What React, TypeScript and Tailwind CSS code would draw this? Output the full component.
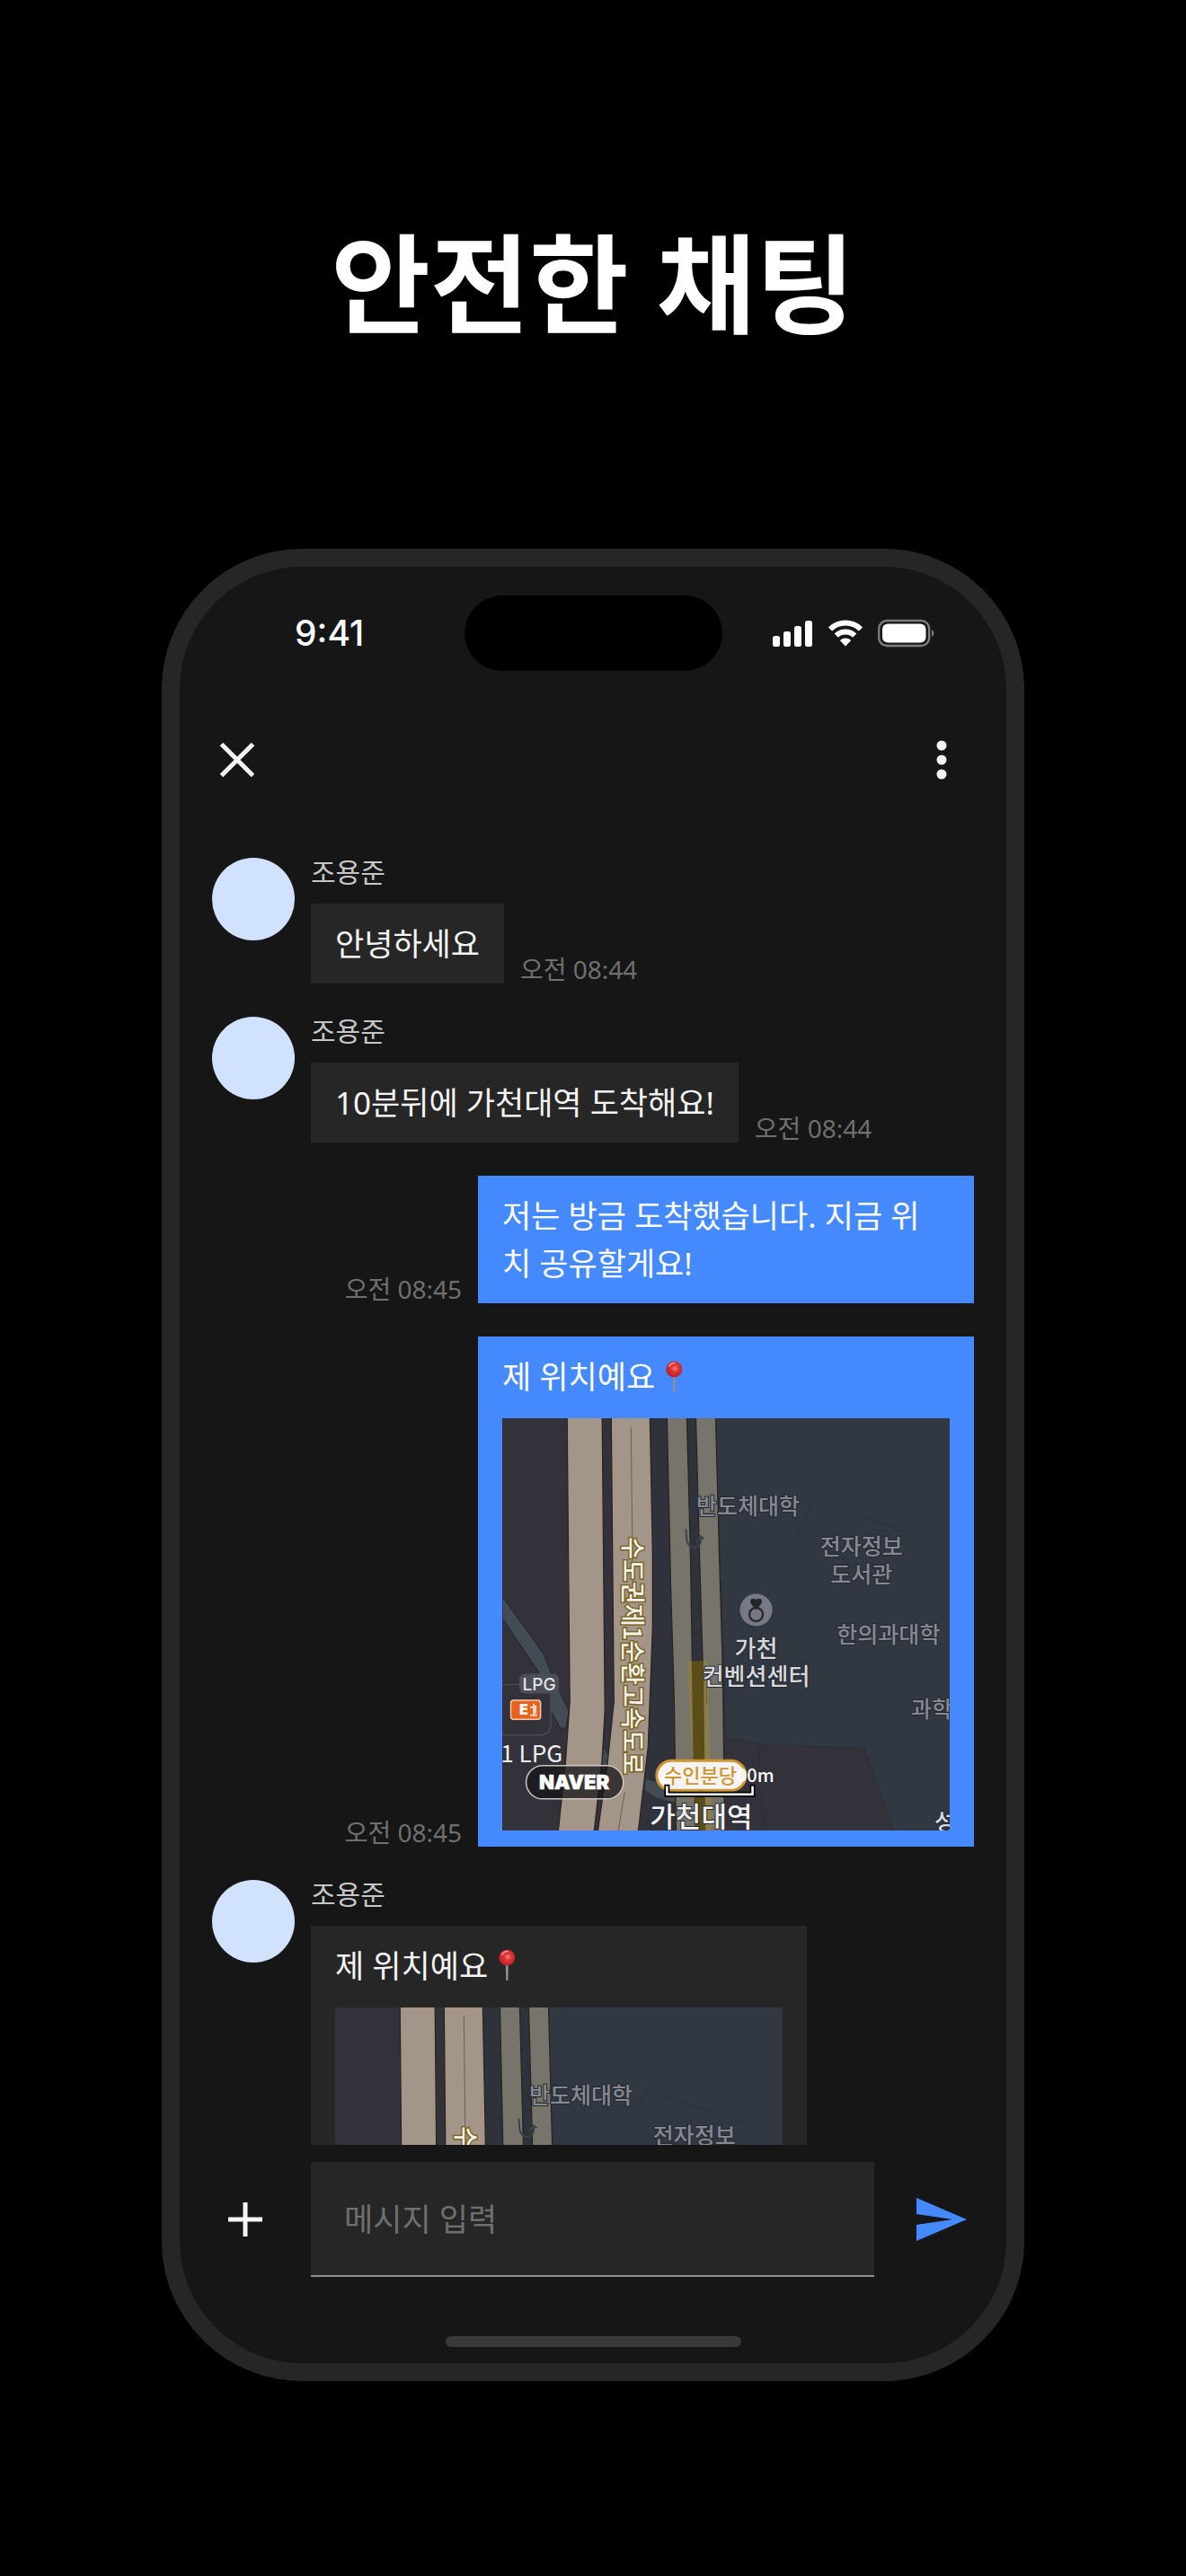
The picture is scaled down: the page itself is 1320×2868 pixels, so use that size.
import { useState, ChangeEvent, ReactNode } from 'react';

interface Message {
  id: number;
  sender: string;
  mine: boolean;
  text: string;
  time: string;
  hasMap?: boolean;
}

const messages: Message[] = [
  { id: 1, sender: '조용준', mine: false, text: '안녕하세요', time: '오전 08:44' },
  { id: 2, sender: '조용준', mine: false, text: '10분뒤에 가천대역 도착해요!', time: '오전 08:44' },
  { id: 3, sender: '나', mine: true, text: '저는 방금 도착했습니다. 지금 위\n치 공유할게요!', time: '오전 08:45' },
  { id: 4, sender: '나', mine: true, text: '제 위치예요', time: '오전 08:45', hasMap: true },
  { id: 5, sender: '조용준', mine: false, text: '제 위치예요', time: '오전 08:46', hasMap: true },
];

function SignalIcon() {
  return (
    <svg viewBox="0 0 45 30" className="w-[45px] h-[30px]" fill="#fff" aria-hidden="true">
      <rect x="0" y="18" width="8" height="12" rx="2.5" />
      <rect x="12" y="13" width="8" height="17" rx="2.5" />
      <rect x="24" y="7" width="8" height="23" rx="2.5" />
      <rect x="36" y="1" width="8" height="29" rx="2.5" />
    </svg>
  );
}

function WifiIcon() {
  return (
    <svg viewBox="0 0 40 30" className="w-10 h-[30px]" aria-hidden="true">
      <g fill="none" stroke="#fff" strokeWidth="6">
        <path d="M3 10.5 A24 24 0 0 1 37 10.5" />
        <path d="M9.8 17.6 A14.6 14.6 0 0 1 30.2 17.6" />
      </g>
      <path d="M20 29.4 L13.8 23 A9 9 0 0 1 26.2 23 Z" fill="#fff" />
    </svg>
  );
}

function BatteryIcon() {
  return (
    <svg viewBox="0 0 64 32" className="w-16 h-8" aria-hidden="true">
      <rect x="1.2" y="2" width="56" height="28" rx="9" fill="none" stroke="#7d7d7d" strokeWidth="2.4" />
      <rect x="5" y="5.5" width="48.5" height="21" rx="6" fill="#fff" />
      <path d="M60 12 a4.5 4.5 0 0 1 0 8 z" fill="#7d7d7d" />
    </svg>
  );
}

function PinIcon() {
  return (
    <svg viewBox="0 0 42 42" className="w-[42px] h-[42px] shrink-0" role="img" aria-label="핀">
      <defs>
        <radialGradient id="pinHead" cx="0.55" cy="0.45" r="0.6">
          <stop offset="0" stopColor="#f58078" />
          <stop offset="0.35" stopColor="#e0393a" />
          <stop offset="1" stopColor="#b81722" />
        </radialGradient>
      </defs>
      <path d="M19.8 20 h3 l-0.4 18 h-2.2 z" fill="#8f8e94" />
      <circle cx="21.3" cy="12.5" r="9" fill="url(#pinHead)" />
      <path d="M15.5 9 q2.5 -3.5 6.5 -3.5" stroke="#f5a09a" strokeWidth="1.5" fill="none" strokeLinecap="round" />
    </svg>
  );
}

function LocationMap() {
  return (
    <svg
      viewBox="0 0 497 458"
      className="block w-full h-auto mt-5 font-['Noto_Sans_CJK_KR',sans-serif] font-medium"
      role="img"
      aria-label="가천대역 주변 지도"
    >
      <rect width="497" height="458" fill="#33323a" />
      <path d="M164 0 H237 L249 355 L230 458 H160 Z" fill="#2f323b" />
      <path d="M237 0 H497 V458 H435 L402 367 L285 362 L249 355 Z" fill="#313842" />
      <path d="M402 367 L435 458 M285 362 L290 458 M249 355 L285 362 L402 367" stroke="#2d3037" strokeWidth="1.5" fill="none" />
      <path d="M328 132 L346 90 L465 133" stroke="#2e343d" strokeWidth="1.5" fill="none" />

      {/* side street */}
      <path d="M0 198 L46 262 L56 288 L74 325 L71 344 L65 345 L50 318 L41 283 L0 222 Z" fill="#434b55" stroke="#26272d" />
      <path d="M113 368 L118 374 L117 400 L110 385 Z" fill="#434b55" />
      <path d="M159 401 L193 411 V427 L172 422 L159 414 Z" fill="#434b55" />

      {/* expressway */}
      <g fill="#a39588" stroke="#29241f" strokeWidth="1.3">
        <path d="M72 -2 L74 215 L75 315 L70 385 L62 460 H102 L111 379 L114 325 L113 215 L111 -2 Z" />
        <path d="M121 -2 L124 315 L117 382 L106 460 H151 L162 365 L167 232 L167 149 L164 -2 Z" />
      </g>
      <path d="M143 10 L145 182 M136 415 L129 458" stroke="#6a5f56" fill="none" />
      <g fill="#77746c" stroke="#29241f" strokeWidth="1.3">
        <path d="M183 -2 L187 182 L191 315 L193 460 H214 L211 269 L209 149 L205 -2 Z" />
        <path d="M215 -2 L219 149 L223 282 L225 460 H247 L245 282 L241 149 L237 -2 Z" />
      </g>
      <path d="M206 270 H228 L231 380 L233 458 H213 L211 380 Z" fill="#a38b1b" fillOpacity="0.4" />
      <path d="M211 270 H223 L225 458 H215 Z" fill="#5a4a10" fillOpacity="0.7" />
      <path d="M209 306 l4 4 M227 318 v-18" stroke="#6d6125" fill="none" />
      <path d="M204 123 L205 136 Q207 144 214 144 Q221 143 221 132 M216 138 L220 131 L224 134" stroke="#3c4048" strokeWidth="2" fill="none" />

      {/* gas station */}
      <rect x="-6" y="296" width="60" height="56" rx="11" fill="#33323a" stroke="#54545c" />
      <rect x="19" y="284" width="44" height="22" rx="6" fill="#4c4f56" />
      <text x="41" y="302" fontSize="19" textAnchor="middle" fill="#e4e4e6" className="font-['Inter',sans-serif]">LPG</text>
      <rect x="9.5" y="313.5" width="33" height="21" rx="3" fill="#e8611f" stroke="#f7c9a9" strokeWidth="1.5" />
      <text x="19" y="329" fontSize="16" fill="#fff" className="font-['Inter',sans-serif] font-black">E</text>
      <path d="M35 317 v13 M31 321 h4 M31 330 h8 M37 319 v9" stroke="#fbd9c4" strokeWidth="2" fill="none" />
      <text x="67" y="382" fontSize="26" textAnchor="end" fill="#efeff1" fontWeight="400">1 LPG</text>

      {/* place names */}
      <g textAnchor="middle" stroke="#26282f" strokeWidth="2" paintOrder="stroke">
        <g fontSize="25" fill="#858993">
          <text x="273" y="107">반도체대학</text>
          <text x="399" y="152">전자정보</text>
          <text x="399" y="183">도서관</text>
          <text x="429" y="250">한의과대학</text>
          <text x="477" y="332">과학</text>
        </g>
        <g fontSize="26" fill="#d8d8dc">
          <text x="282" y="265">가천</text>
          <text x="282" y="296">컨벤션센터</text>
          <text x="492" y="458">성</text>
        </g>
      </g>
      <circle cx="282" cy="213" r="18" fill="#777984" />
      <circle cx="282" cy="218" r="7.5" fill="none" stroke="#24262c" strokeWidth="2.2" />
      <path d="M282 212 L277 206 Q275 201 279 201 Q281 201 282 203 Q283 201 285 201 Q289 201 287 206 Z" fill="#24262c" stroke="#24262c" strokeWidth="1.5" />

      <text
        transform="translate(135 132) rotate(90)"
        fontSize="27"
        fill="#f4f2ea"
        stroke="#7a6424"
        strokeWidth="3"
        paintOrder="stroke"
      >
        수도권제1순환고속도로
      </text>

      {/* station and scale bar */}
      <text x="221" y="454" fontSize="31" textAnchor="middle" fill="#f1f1f3" stroke="#26282f" strokeWidth="2" paintOrder="stroke">가천대역</text>
      <rect x="171.5" y="380.5" width="99" height="33" rx="16.5" fill="#f4f4f6" stroke="#cf962f" strokeWidth="3" />
      <circle cx="184" cy="400" r="7" fill="#fff" />
      <text x="220" y="405" fontSize="22" textAnchor="middle" fill="#cf962f">수인분당</text>
      <text x="302" y="404" fontSize="20" textAnchor="end" fill="#fff">00m</text>
      <path d="M183 410 V418 H278 V410" fill="none" stroke="#000" strokeWidth="6" strokeLinecap="square" />
      <path d="M183 410 V418 H278 V410" fill="none" stroke="#fff" strokeWidth="2.5" strokeLinecap="square" />

      <rect x="26.5" y="386" width="108" height="37" rx="18.5" fill="#17161a" fillOpacity="0.75" stroke="#cfc6c2" strokeWidth="1.5" />
      <text x="80" y="412" fontSize="22" textAnchor="middle" fill="#fff" stroke="#fff" strokeWidth="0.5" className="font-['Inter',sans-serif] font-black">NAVER</text>
    </svg>
  );
}

function Time({ children }: { children: ReactNode }) {
  return <time className="text-[28px] leading-8 text-[#6f6f6f] whitespace-nowrap">{children}</time>;
}

function Bubble({ message }: { message: Message }) {
  const wide = message.mine || message.hasMap;
  return (
    <div
      className={`px-[27px] py-[18px] ${message.mine ? 'bg-[#4589ff] text-white' : 'bg-[#262626] text-[#f4f4f4]'} ${
        wide ? 'w-[552px]' : ''
      }`}
    >
      <div className="flex items-center">
        <p className="text-[35px] leading-[53px] whitespace-pre-line">{message.text}</p>
        {message.hasMap && <PinIcon />}
      </div>
      {message.hasMap && <LocationMap />}
    </div>
  );
}

function MessageRow({ message }: { message: Message }) {
  if (message.mine) {
    return (
      <li className="flex items-end justify-end gap-[18px] shrink-0">
        <Time>{message.time}</Time>
        <Bubble message={message} />
      </li>
    );
  }

  return (
    <li className="flex items-start gap-[18px] shrink-0">
      <div className="size-[92px] rounded-full bg-[#d0e2ff] shrink-0" />
      <div>
        <p className="text-[30px] leading-8 mb-[19px] text-[#c6c6c6]">{message.sender}</p>
        <div className="flex items-end gap-[18px]">
          <Bubble message={message} />
          <Time>{message.time}</Time>
        </div>
      </div>
    </li>
  );
}

export default function App() {
  const [draft, setDraft] = useState<string>('');

  const onDraftChange = (e: ChangeEvent<HTMLInputElement>): void => {
    setDraft(e.target.value);
  };

  return (
    <main className="min-h-screen bg-black pt-[236px] pb-[217px] font-['Noto_Sans','Noto_Sans_CJK_KR',sans-serif]">
      <h1 className="text-center text-[120px] leading-[160px] font-bold text-white">안전한 채팅</h1>

      <div className="mt-[215px] mx-auto w-full max-w-[960px] rounded-[156px] border-[20px] border-[#262626] bg-[#161616] overflow-hidden">
        <div className="grid grid-cols-[1fr_287px_1fr] items-center pt-8">
          <span className="pl-32 text-[39px] leading-[48px] font-medium text-white font-['Inter',sans-serif]">9:41</span>
          <div className="h-[84px] rounded-full bg-black" />
          <div className="flex items-center justify-end gap-4 pr-[79px]">
            <SignalIcon />
            <WifiIcon />
            <BatteryIcon />
          </div>
        </div>

        <header className="mt-[67px] flex items-center justify-between pl-8 pr-10">
          <button type="button" aria-label="닫기" className="size-16 flex items-center justify-center">
            <svg viewBox="0 0 40 40" className="size-10" stroke="#f4f4f4" strokeWidth="5" aria-hidden="true">
              <path d="M2.5 2.5 L37.5 37.5 M37.5 2.5 L2.5 37.5" />
            </svg>
          </button>
          <button type="button" aria-label="더보기" className="size-16 flex items-center justify-center">
            <svg viewBox="0 0 12 44" className="w-3 h-11" fill="#f4f4f4" aria-hidden="true">
              <circle cx="6" cy="6" r="5.5" />
              <circle cx="6" cy="22" r="5.5" />
              <circle cx="6" cy="38" r="5.5" />
            </svg>
          </button>
        </header>

        <ul className="mt-[77px] h-[1433px] overflow-hidden flex flex-col gap-[37px] px-9">
          {messages.map((message) => (
            <MessageRow key={message.id} message={message} />
          ))}
        </ul>

        <form className="mt-[19px] flex items-center pl-9 pr-10" onSubmit={(e) => e.preventDefault()}>
          <button type="button" aria-label="첨부" className="w-[74px] h-16 mr-9 flex items-center justify-center">
            <svg viewBox="0 0 38 38" className="size-[38px]" stroke="#f4f4f4" strokeWidth="5" aria-hidden="true">
              <path d="M19 0 V38 M0 19 H38" />
            </svg>
          </button>
          <input
            type="text"
            aria-label="메시지 입력"
            placeholder="메시지 입력"
            value={draft}
            onChange={onDraftChange}
            className="flex-1 min-w-0 h-[128px] px-[37px] bg-[#262626] border-b-2 border-[#8d8d8d] text-[35px] text-[#f4f4f4] placeholder:text-[#6f6f6f] outline-none"
          />
          <button type="submit" aria-label="보내기" className="w-16 h-16 ml-[43px] flex items-center justify-center">
            <svg viewBox="0 0 56 48" className="w-14 h-12" fill="#4589ff" aria-hidden="true">
              <path d="M0 0 L56 24 L0 48 V30 L40 24 L0 18 Z" />
            </svg>
          </button>
        </form>

        <div className="mt-[66px] mb-[18px] mx-auto h-3 w-[329px] rounded-full bg-[#393939]" />
      </div>
    </main>
  );
}
